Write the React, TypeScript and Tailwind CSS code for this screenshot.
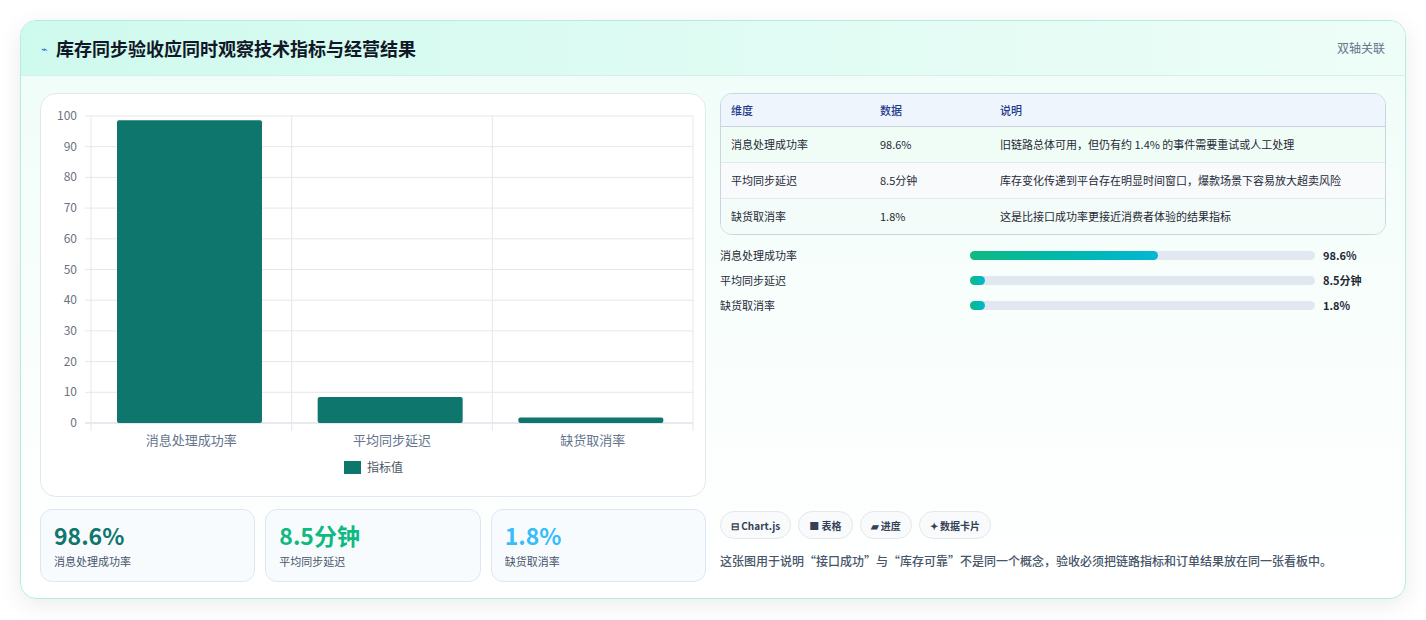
import React from "react";

const F = { fontFamily: '"Noto Sans CJK SC", "Noto Sans", sans-serif' };

function Chart() {
  const x0 = 50, x1 = 652, y0 = 22, y1 = 329;
  const ys = [0, 10, 20, 30, 40, 50, 60, 70, 80, 90, 100];
  const yv = (v: number) => y1 - (v / 100) * (y1 - y0);
  const cw = (x1 - x0) / 3;
  const data = [
    ["消息处理成功率", 98.6],
    ["平均同步延迟", 8.5],
    ["缺货取消率", 1.8],
  ] as const;
  return (
    <svg width="665" height="401" style={F}>
      {ys.map((v) => (
        <g key={v}>
          <line x1={x0 - 6} x2={x1} y1={yv(v)} y2={yv(v)} stroke={v === 0 ? "#cbd5e1" : "#e5e7eb"} />
          <text x={x0 - 14} y={yv(v) + 4} textAnchor="end" fontSize="12" fill="#6b7280">{v}</text>
        </g>
      ))}
      {[0, 1, 2, 3].map((i) => (
        <line key={i} x1={x0 + i * cw} x2={x0 + i * cw} y1={y0} y2={y1 + 8} stroke="#e5e7eb" />
      ))}
      {data.map(([l, v], i) => (
        <g key={l}>
          <rect x={x0 + i * cw + 26} y={yv(v)} width={145} height={y1 - yv(v)} rx="2" fill="#0f766e" />
          <text x={x0 + i * cw + cw / 2} y={351} textAnchor="middle" fontSize="13" fill="#64748b">{l}</text>
        </g>
      ))}
      <rect x={303} y={367} width={17} height={13} fill="#0f766e" />
      <text x={326} y={378} fontSize="12" fill="#4b5563">指标值</text>
    </svg>
  );
}

const rows = [
  ["消息处理成功率", "98.6%", "旧链路总体可用，但仍有约 1.4% 的事件需要重试或人工处理", "bg-[#f0fdf6]"],
  ["平均同步延迟", "8.5分钟", "库存变化传递到平台存在明显时间窗口，爆款场景下容易放大超卖风险", "bg-[#f8fafc]"],
  ["缺货取消率", "1.8%", "这是比接口成功率更接近消费者体验的结果指标", "bg-[#f3fcf8]"],
];

export default function App() {
  return (
    <div className="w-[1426px] h-[620px] bg-white pt-5 pl-5" style={F}>
      <div className="w-[1386px] h-[579px] rounded-2xl border border-[#b2ece4] shadow-[0_6px_24px_rgba(0,0,0,0.08)] bg-gradient-to-b from-[#effdf7] via-[#f8fefc] to-white overflow-hidden">
        <div className="h-[55px] flex items-center justify-between px-5 bg-gradient-to-r from-[#cffaee] to-[#eefdf8] border-b border-[#d5efe9]">
          <div className="flex items-center gap-2">
            <span className="text-[#2563eb] text-[11px]">⌁</span>
            <span className="text-[18px] font-bold text-[#111827]">库存同步验收应同时观察技术指标与经营结果</span>
          </div>
          <span className="text-[12px] text-[#64748b]">双轴关联</span>
        </div>
        <div className="flex gap-[14px] px-[19px] pt-[17px]">
          <div className="w-[666px] flex flex-col gap-3">
            <div className="h-[404px] rounded-2xl border border-[#e2e8f0] bg-white">
              <Chart />
            </div>
            <div className="grid grid-cols-3 gap-[10px]">
              {[["98.6%", "text-[#0f766e]"], ["8.5分钟", "text-[#10b981]"], ["1.8%", "text-[#38bdf8]"]].map(([v, c], i) => (
                <div key={v} className="h-[73px] rounded-xl border border-[#dbe7f3] bg-[#f8fbfe] px-[13px] pt-[10px]">
                  <div className={`text-[23px] font-bold leading-[30px] ${c}`}>{v}</div>
                  <div className="text-[11px] text-[#475569] mt-[3px]">{rows[i][0]}</div>
                </div>
              ))}
            </div>
          </div>
          <div className="w-[666px] flex flex-col">
            <div className="rounded-xl border border-[#cbd5e1] overflow-hidden text-[11px] text-[#1f2937]">
              <div className="flex h-[33px] items-center bg-[#eef5fd] border-b border-[#cbd5e1] text-[#1e3a8a] font-medium">
                <div className="w-[159px] pl-[10px]">维度</div>
                <div className="w-[120px]">数据</div>
                <div className="flex-1">说明</div>
              </div>
              {rows.map(([a, b, c, bg], i) => (
                <div key={a} className={`flex py-[9px] ${bg} ${i < 2 ? "border-b border-[#e2e8f0]" : ""}`}>
                  <div className="w-[159px] pl-[10px] leading-[17px]">{a}</div>
                  <div className="w-[120px] leading-[17px]">{b}</div>
                  <div className="flex-1 pr-4 leading-[17px]">{c}</div>
                </div>
              ))}
            </div>
            <div className="flex flex-col gap-[9px] mt-[12px]">
              {[["消息处理成功率", "98.6%", "w-[188px]"], ["平均同步延迟", "8.5分钟", "w-[15px]"], ["缺货取消率", "1.8%", "w-[15px]"]].map(([a, b, w]) => (
                <div key={a} className="flex items-center h-[16px] text-[11px]">
                  <div className="w-[250px] text-[#1f2937]">{a}</div>
                  <div className="w-[345px] h-[9px] rounded-full bg-[#e2e8f0]">
                    <div className={`${w} h-full rounded-full bg-gradient-to-r from-[#10b981] to-[#06b6d4]`} />
                  </div>
                  <div className="ml-[8px] font-bold text-[#1f2937]">{b}</div>
                </div>
              ))}
            </div>
            <div className="flex gap-[7px] mt-[198px]">
              {["⊟ Chart.js", "■ 表格", "▰ 进度", "✦ 数据卡片"].map((t) => (
                <span key={t} className="h-[28px] px-[10px] flex items-center rounded-full border border-[#e5e7eb] bg-[#f8fafc] text-[10px] font-semibold text-[#334155]">{t}</span>
              ))}
            </div>
            <div className="mt-[13px] text-[12px] text-[#475569] font-medium">这张图用于说明“接口成功”与“库存可靠”不是同一个概念，验收必须把链路指标和订单结果放在同一张看板中。</div>
          </div>
        </div>
      </div>
    </div>
  );
}
